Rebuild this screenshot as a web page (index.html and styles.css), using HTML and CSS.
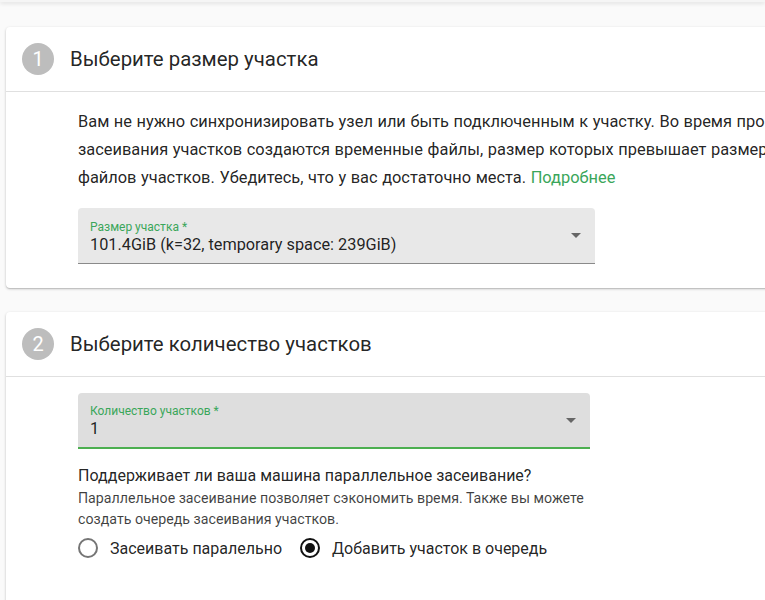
FILE: index.html
```html
<!DOCTYPE html>
<html lang="ru">
<head>
<meta charset="utf-8">
<link rel="stylesheet" href="styles.css">
</head>
<body>
<div class="topbar"></div>
<main class="steps">
  <section class="card">
    <header class="card-head">
      <span class="step-num">1</span>
      <h2 class="step-title">Выберите размер участка</h2>
    </header>
    <div class="card-body">
      <p class="desc">Вам не нужно синхронизировать узел или быть подключенным к участку. Во время процесса засеивания участков создаются временные файлы, размер которых превышает размер конечных файлов участков. Убедитесь, что у вас достаточно места. <a class="link" href="#">Подробнее</a></p>
      <div class="select select-size">
        <div class="select-inner">
          <span class="select-label">Размер участка *</span>
          <span class="select-value">101.4GiB (k=32, temporary space: 239GiB)</span>
        </div>
        <span class="arrow"></span>
      </div>
    </div>
  </section>
  <section class="card">
    <header class="card-head">
      <span class="step-num">2</span>
      <h2 class="step-title">Выберите количество участков</h2>
    </header>
    <div class="card-body body-2">
      <div class="select select-count focused">
        <div class="select-inner">
          <span class="select-label">Количество участков *</span>
          <span class="select-value">1</span>
        </div>
        <span class="arrow"></span>
      </div>
      <p class="question">Поддерживает ли ваша машина параллельное засеивание?</p>
      <p class="hint">Параллельное засеивание позволяет сэкономить время. Также вы можете создать очередь засеивания участков.</p>
      <div class="radios">
        <label class="radio"><span class="radio-circle"></span>Засеивать паралельно</label>
        <label class="radio"><span class="radio-circle checked"></span>Добавить участок в очередь</label>
      </div>
    </div>
  </section>
</main>
</body>
</html>
```
FILE: styles.css
```css
html, body {
  margin: 0;
  padding: 0;
  background: #fafafa;
  font-family: Roboto, "Noto Sans", sans-serif;
  color: rgba(0,0,0,0.87);
  overflow: hidden;
}
.topbar {
  height: 2px;
  background: #f5f5f5;
  box-shadow: 0 1px 4px rgba(0,0,0,0.18);
}
.steps {
  padding: 25px 0 0 6px;
  display: flex;
  flex-direction: column;
  gap: 24px;
  width: 860px;
}
.card {
  background: #fff;
  border-radius: 4px;
  box-shadow: 0 1px 3px rgba(0,0,0,0.2), 0 1px 1px rgba(0,0,0,0.12);
}
.card-head {
  height: 64px;
  display: flex;
  align-items: center;
  padding-left: 16px;
  gap: 16px;
  border-bottom: 1px solid #e0e0e0;
}
.step-num {
  width: 32px;
  height: 32px;
  border-radius: 50%;
  background: #bdbdbd;
  color: #fff;
  font-size: 20px;
  display: flex;
  align-items: center;
  justify-content: center;
}
.step-title {
  margin: 0;
  font-size: 20.4px;
  font-weight: 400;
}
.card-body {
  padding: 16px 0 24px 72px;
}
.desc {
  margin: 0 0 16px;
  width: 780px;
  font-size: 16.4px;
  line-height: 28px;
  word-spacing: 0.5px;
}
.link {
  color: #3aa65a;
  text-decoration: none;
}
.select {
  height: 56px;
  background: #e8e8e8;
  border-radius: 4px 4px 0 0;
  border-bottom: 1px solid #8a8a8a;
  display: flex;
  align-items: center;
  padding: 0 12px;
  box-sizing: border-box;
}
.select-size { width: 517px; }
.select-count { width: 512px; }
.select.focused {
  background: #dedede;
  border-bottom: 2px solid #4caf50;
}
.select-inner {
  flex: 1;
  display: flex;
  flex-direction: column;
  padding-top: 2px;
}
.select-label {
  font-size: 12px;
  color: #3aa65a;
  line-height: 16px;
}
.select-value {
  font-size: 16.3px;
  line-height: 20px;
}
.arrow {
  width: 0;
  height: 0;
  border-left: 5px solid transparent;
  border-right: 5px solid transparent;
  border-top: 5px solid #666;
  margin-right: 2px;
}
.body-2 {
  padding-top: 16px;
  padding-bottom: 60px;
}
.question {
  margin: 16px 0 1px;
  font-size: 16px;
  line-height: 22px;
}
.hint {
  margin: 0;
  width: 520px;
  font-size: 14.2px;
  line-height: 21px;
  color: rgba(0,0,0,0.75);
}
.radios {
  display: flex;
  gap: 18px;
  margin-top: 8px;
}
.radio {
  display: flex;
  align-items: center;
  gap: 12px;
  font-size: 16px;
}
.radio-circle {
  width: 16px;
  height: 16px;
  border: 2px solid #757575;
  border-radius: 50%;
  box-sizing: content-box;
  position: relative;
}
.radio-circle.checked {
  border-color: #111;
}
.radio-circle.checked::after {
  content: "";
  position: absolute;
  left: 3px;
  top: 3px;
  width: 10px;
  height: 10px;
  border-radius: 50%;
  background: #111;
}
```
